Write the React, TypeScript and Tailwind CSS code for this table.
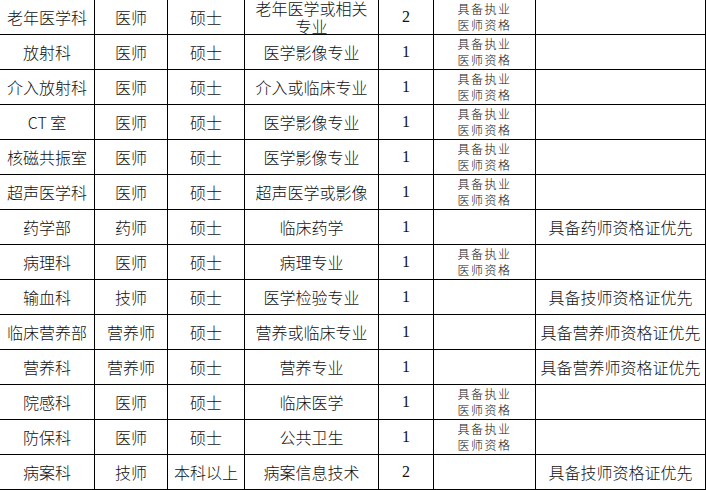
type Row = {
  dept: string;
  title: string;
  degree: string;
  major: string;
  count: string;
  license: boolean;
  note: string;
};

const rows: Row[] = [
  { dept: "老年医学科", title: "医师", degree: "硕士", major: "老年医学或相关专业", count: "2", license: true, note: "" },
  { dept: "放射科", title: "医师", degree: "硕士", major: "医学影像专业", count: "1", license: true, note: "" },
  { dept: "介入放射科", title: "医师", degree: "硕士", major: "介入或临床专业", count: "1", license: true, note: "" },
  { dept: "CT 室", title: "医师", degree: "硕士", major: "医学影像专业", count: "1", license: true, note: "" },
  { dept: "核磁共振室", title: "医师", degree: "硕士", major: "医学影像专业", count: "1", license: true, note: "" },
  { dept: "超声医学科", title: "医师", degree: "硕士", major: "超声医学或影像", count: "1", license: true, note: "" },
  { dept: "药学部", title: "药师", degree: "硕士", major: "临床药学", count: "1", license: false, note: "具备药师资格证优先" },
  { dept: "病理科", title: "医师", degree: "硕士", major: "病理专业", count: "1", license: true, note: "" },
  { dept: "输血科", title: "技师", degree: "硕士", major: "医学检验专业", count: "1", license: false, note: "具备技师资格证优先" },
  { dept: "临床营养部", title: "营养师", degree: "硕士", major: "营养或临床专业", count: "1", license: false, note: "具备营养师资格证优先" },
  { dept: "营养科", title: "营养师", degree: "硕士", major: "营养专业", count: "1", license: false, note: "具备营养师资格证优先" },
  { dept: "院感科", title: "医师", degree: "硕士", major: "临床医学", count: "1", license: true, note: "" },
  { dept: "防保科", title: "医师", degree: "硕士", major: "公共卫生", count: "1", license: true, note: "" },
  { dept: "病案科", title: "技师", degree: "本科以上", major: "病案信息技术", count: "2", license: false, note: "具备技师资格证优先" },
];

const cell = "flex items-center justify-center border-r border-black text-center overflow-hidden";

export default function App() {
  return (
    <div
      className="w-[706px] h-[490px] overflow-hidden bg-white text-[16px] font-light text-[#111]"
      style={{ fontFamily: '"Noto Sans CJK SC", "Noto Sans", sans-serif' }}
    >
      {rows.map((row) => (
        <div key={row.dept} className="flex h-[35px] border-b border-black">
          <div className={`${cell} w-[95px]`}>{row.dept}</div>
          <div className={`${cell} w-[73px]`}>{row.title}</div>
          <div className={`${cell} w-[77px]`}>{row.degree}</div>
          <div className={`${cell} w-[134px] leading-[18px] px-1`}>
            <span className="block">{row.major}</span>
          </div>
          <div className={`${cell} w-[55px] font-['Liberation_Serif',serif]`}>{row.count}</div>
          <div className={`${cell} w-[102px] text-[12px] leading-[16px] tracking-[1.5px]`}>
            {row.license && (
              <span className="block">
                具备执业
                <br />
                医师资格
              </span>
            )}
          </div>
          <div className={`${cell} w-[170px]`}>{row.note}</div>
        </div>
      ))}
    </div>
  );
}
